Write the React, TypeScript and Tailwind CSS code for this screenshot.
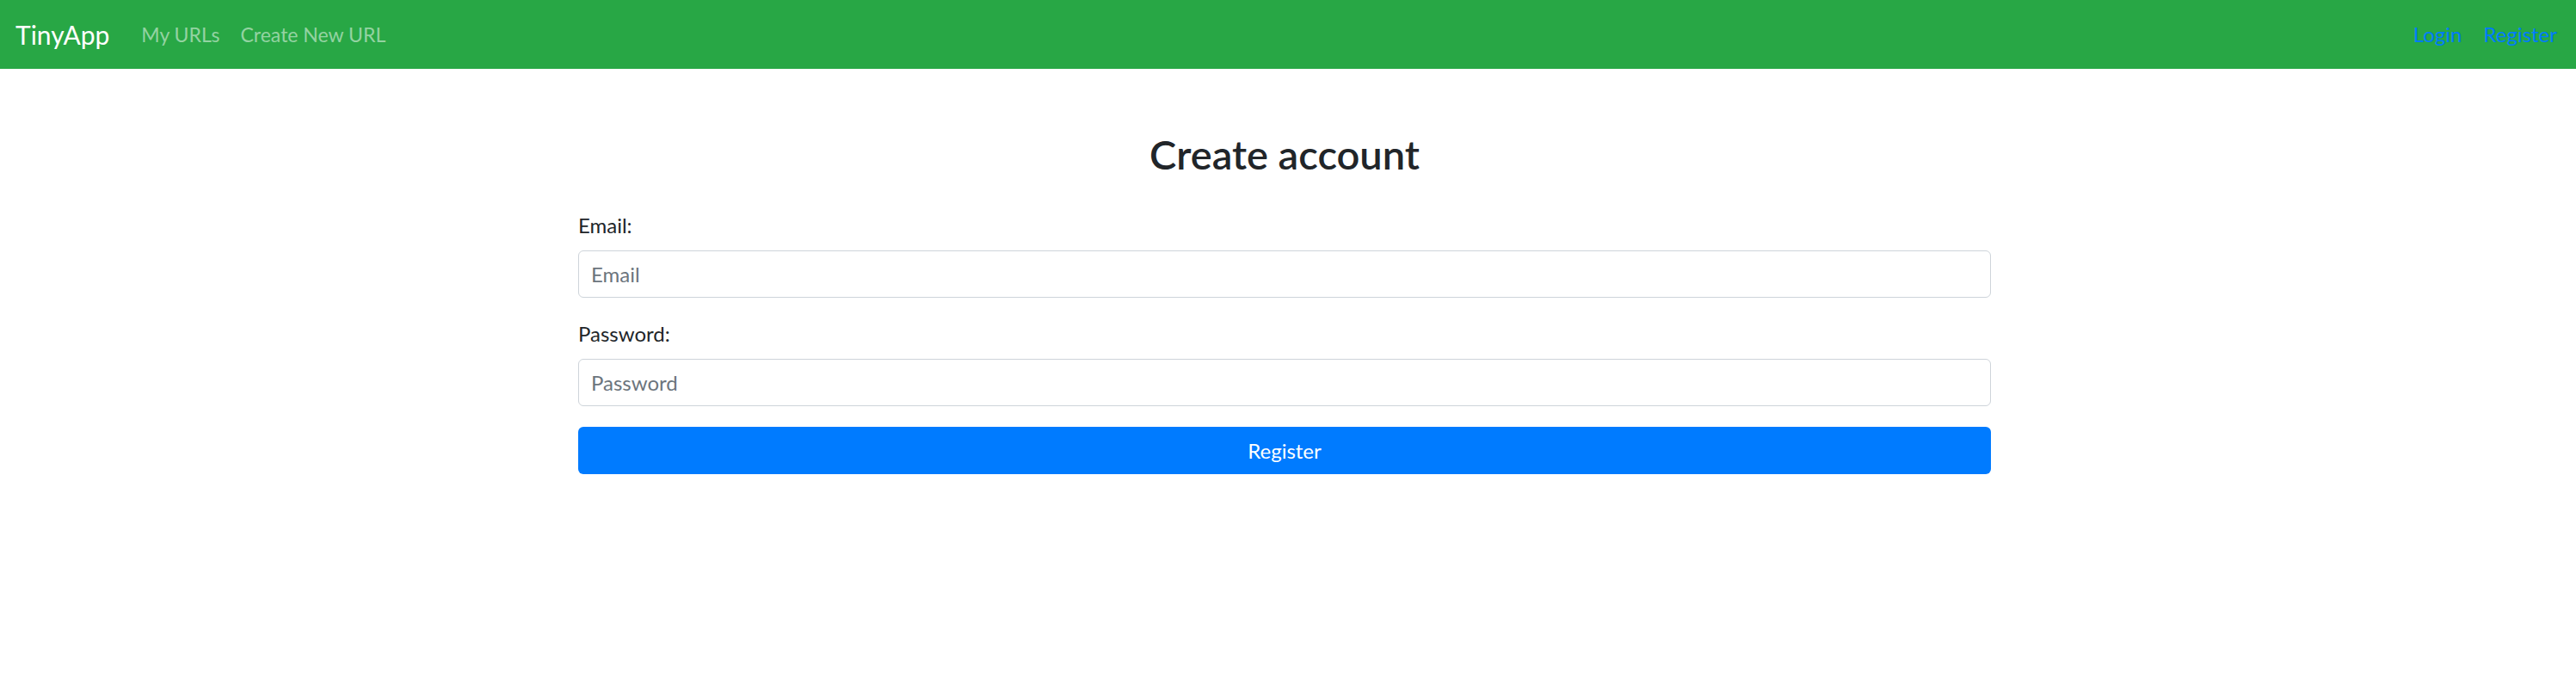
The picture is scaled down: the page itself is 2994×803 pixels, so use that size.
import React from 'react';

const NavBar = () => (
  <nav className="h-[80px] bg-[#28a745] flex items-center justify-between pl-[18px] pr-[22px]">
    <div className="flex items-center">
      <a href="#" className="text-white text-[30px] leading-none mr-[37px]">TinyApp</a>
      <div className="flex items-center gap-[24px] text-[23px] text-white/50">
        <a href="#">My URLs</a>
        <a href="#">Create New URL</a>
      </div>
    </div>
    <div className="flex items-center gap-[25px] text-[24px] text-[#007bff]">
      <a href="#">Login</a>
      <a href="#">Register</a>
    </div>
  </nav>
);

const App = () => {
  return (
    <div className="min-h-screen bg-white font-['Lato','Liberation_Sans',sans-serif] text-[#212529]">
      <NavBar />

      <div className="pr-[8px]">
        <main className="w-[1642px] mx-auto pt-[71px]">
          <h1 className="text-center text-[47px] leading-[1.2] font-semibold mb-[37px]">Create account</h1>

          <form className="flex flex-col" onSubmit={(e) => e.preventDefault()}>
            <label htmlFor="email" className="text-[24px] leading-[36px] mb-[11px]">Email:</label>
            <input
              id="email"
              type="email"
              placeholder="Email"
              className="h-[55px] w-full border border-[#ced4da] rounded-[6px] px-[14px] text-[24px] placeholder:text-[#6c757d] outline-none"
            />

            <label htmlFor="password" className="text-[24px] leading-[36px] mt-[24px] mb-[11px]">Password:</label>
            <input
              id="password"
              type="password"
              placeholder="Password"
              className="h-[55px] w-full border border-[#ced4da] rounded-[6px] px-[14px] text-[24px] placeholder:text-[#6c757d] outline-none"
            />

            <button
              type="submit"
              className="mt-[24px] h-[55px] w-full bg-[#007bff] text-white text-[24px] rounded-[6px]"
            >
              Register
            </button>
          </form>
        </main>
      </div>
    </div>
  );
};

export default App;
